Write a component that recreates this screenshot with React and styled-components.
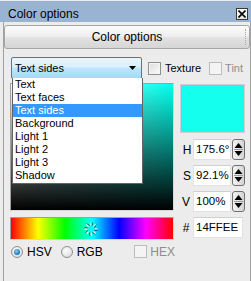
import React from 'react';
import styled, { createGlobalStyle } from 'styled-components';

const Global = createGlobalStyle`
  html, body { margin: 0; padding: 0; background: #ececec; }
  body { font-family: "Liberation Sans", Arial, sans-serif; color: #000; }
`;

const Window = styled.div`
  width: 251px;
  height: 281px;
  background: #ececec;
  display: flex;
  flex-direction: column;
  overflow: hidden;
`;

const TitleBar = styled.div`
  margin-top: 1px;
  height: 21px;
  box-sizing: border-box;
  padding: 6px 3px 0 8px;
  background: #99b4d2;
  display: flex;
  justify-content: space-between;
  align-items: flex-start;
  flex-shrink: 0;
`;

const TitleText = styled.span`
  font-size: 12px;
  line-height: 14px;
`;

const CloseBox = styled.div`
  margin-top: 1px;
  width: 12px;
  height: 12px;
  box-sizing: border-box;
  border: 1px solid #3a3a3a;
  background: linear-gradient(#ffffff, #e4e4e4);
  display: flex;
  align-items: center;
  justify-content: center;
`;

const Panel = styled.div`
  flex: 1;
  margin-left: 3px;
  border-left: 1px solid #a0a0a0;
  border-right: 1px solid #a0a0a0;
  display: flex;
  flex-direction: column;
`;

const HeaderButton = styled.div`
  position: relative;
  margin-top: 3px;
  height: 24px;
  box-sizing: border-box;
  border: 1px solid #a6a6a6;
  border-radius: 3px;
  background: linear-gradient(#fbfbfb, #f0f0f0 45%, #e1e1e1 55%, #d6d6d6);
  font-size: 12px;
  line-height: 22px;
  text-align: center;
  &::after {
    content: "";
    position: absolute;
    right: 3px;
    top: 3px;
    bottom: 3px;
    border-left: 1px dotted #a8a8a8;
  }
`;

const Content = styled.div`
  padding: 8px 0 0 6px;
  display: flex;
  flex-direction: column;
`;

const TopRow = styled.div`
  position: relative;
  z-index: 2;
  display: flex;
  align-items: center;
  height: 22px;
`;

const Combo = styled.div`
  position: relative;
  margin-left: 1px;
  width: 131px;
  height: 22px;
  box-sizing: border-box;
  border: 1px solid #3c7fb1;
  border-radius: 2px;
  background: linear-gradient(#eaf6fd, #d9f0fc 45%, #bee6fd 50%, #a7d9f5);
  display: flex;
  align-items: center;
  justify-content: space-between;
  padding: 0 5px 0 3px;
  font-size: 11px;
`;

const ComboList = styled.div`
  position: absolute;
  top: 100%;
  left: 0;
  width: 131px;
  box-sizing: border-box;
  background: #fff;
  border: 1px solid #646464;
  border-top: none;
  padding-bottom: 1px;
`;

const ComboItem = styled.div`
  height: 13px;
  line-height: 13px;
  font-size: 11px;
  padding-left: 2px;
  background: ${p => (p.$active ? '#3399ff' : 'transparent')};
  color: ${p => (p.$active ? '#fff' : '#000')};
`;

const CheckLabel = styled.div`
  display: flex;
  align-items: center;
  margin-left: ${p => p.$ml}px;
  font-size: 11px;
  color: ${p => (p.$disabled ? '#8d8d8d' : '#000')};
`;

const Box = styled.span`
  width: 13px;
  height: 13px;
  box-sizing: border-box;
  border: 1px solid ${p => (p.$disabled ? '#bcbcbc' : '#8e8f8f')};
  background: ${p => (p.$disabled ? '#f4f4f4' : 'linear-gradient(135deg, #dcdcdc, #fbfbfb)')};
  box-shadow: inset 0 0 0 1px ${p => (p.$disabled ? '#f4f4f4' : '#f4f4f4')};
  margin-right: ${p => p.$gap}px;
`;

const Main = styled.div`
  display: flex;
  gap: 6px;
  margin-top: 4px;
`;

const LeftCol = styled.div`
  width: 164px;
  display: flex;
  flex-direction: column;
`;

const SVSquare = styled.div`
  height: 128px;
  box-sizing: border-box;
  border: 1px solid #a0a0a0;
  border-right-color: #d8d8d8;
  border-bottom-color: #d8d8d8;
  background: linear-gradient(to top, #000, rgba(0, 0, 0, 0)),
    linear-gradient(to right, #fff, #00ffec);
`;

const HueBar = styled.div`
  position: relative;
  margin-top: 6px;
  height: 23px;
  box-sizing: border-box;
  border: 1px solid #a0a0a0;
  border-right-color: #d8d8d8;
  border-bottom-color: #d8d8d8;
  background: linear-gradient(to right, #f00, #ff0, #0f0, #0ff, #00f, #f0f, #f00);
`;

const HueMarker = styled.svg`
  position: absolute;
  left: 71px;
  top: 2px;
`;

const RadioRow = styled.div`
  margin-top: 5px;
  display: flex;
  align-items: center;
  height: 13px;
  padding-left: 1px;
  font-size: 12px;
`;

const RadioItem = styled.div`
  display: flex;
  align-items: center;
  margin-right: ${p => p.$mr}px;
`;

const RadioCircle = styled.span`
  width: 12px;
  height: 12px;
  box-sizing: border-box;
  border-radius: 50%;
  border: 1px solid #8e8f8f;
  background: radial-gradient(circle at 40% 35%, #ffffff, #d4d4d4);
  display: flex;
  align-items: center;
  justify-content: center;
  margin-right: 4px;
  &::after {
    content: "";
    display: ${p => (p.$checked ? 'block' : 'none')};
    width: 6px;
    height: 6px;
    border-radius: 50%;
    background: radial-gradient(circle at 40% 35%, #7fd0f7, #1e73b9 70%, #0f4f8a);
  }
`;

const HexCheck = styled.div`
  margin-left: auto;
  margin-right: -1px;
  display: flex;
  align-items: center;
  font-size: 12px;
  color: #8d8d8d;
`;

const RightCol = styled.div`
  width: 66px;
  display: flex;
  flex-direction: column;
  gap: 5px;
`;

const Swatch = styled.div`
  margin-top: 1px;
  margin-bottom: 1px;
  width: 65px;
  height: 49px;
  box-sizing: border-box;
  border: 1px solid #d0d0d0;
  background: #14ffee;
`;

const FieldRow = styled.div`
  display: flex;
  align-items: center;
  height: 21px;
`;

const FieldLabel = styled.span`
  width: 12px;
  font-size: 12px;
  text-align: center;
  padding-left: ${p => p.$pl || 0}px;
  box-sizing: border-box;
`;

const Field = styled.div`
  width: ${p => p.$w}px;
  height: 21px;
  box-sizing: border-box;
  border: 1px solid #e2e2e2;
  border-top-color: #cfcfcf;
  background: #fff;
  font-size: 11.5px;
  line-height: 19px;
  padding-left: 2px;
  margin-left: 1px;
`;

const Spinner = styled.div`
  margin-left: 1px;
  width: 13px;
  height: 21px;
  box-sizing: border-box;
  border: 1px solid #707070;
  border-radius: 3px;
  background: linear-gradient(to right, #f3f3f3, #d5d5d5);
  display: flex;
  align-items: center;
  justify-content: center;
`;

function Arrow() {
  return (
    <svg width="7" height="4" viewBox="0 0 7 4">
      <path d="M0 0 L7 0 L3.5 4 Z" fill="#000" />
    </svg>
  );
}

function SpinIcon() {
  return (
    <svg width="9" height="15" viewBox="0 0 9 15">
      <path d="M4.5 1 L8.5 6 L0.5 6 Z" fill="#000" />
      <line x1="0" y1="7.5" x2="9" y2="7.5" stroke="#9a9a9a" strokeWidth="1" />
      <path d="M0.5 9 L8.5 9 L4.5 14 Z" fill="#000" />
    </svg>
  );
}

function CloseIcon() {
  return (
    <svg width="8" height="8" viewBox="0 0 8 8">
      <path d="M0.5 0.5 L7.5 7.5 M7.5 0.5 L0.5 7.5" stroke="#000" strokeWidth="1.6" />
    </svg>
  );
}

function Marker() {
  const dirs = [0, 45, 90, 135, 180, 225, 270, 315];
  return (
    <HueMarker width="18" height="18" viewBox="-9 -9 18 18">
      {dirs.map(a => {
        const r = (a * Math.PI) / 180;
        const x1 = Math.cos(r) * 3.5;
        const y1 = Math.sin(r) * 3.5;
        const x2 = Math.cos(r) * 6.5;
        const y2 = Math.sin(r) * 6.5;
        const ox = -Math.sin(r) * 1;
        const oy = Math.cos(r) * 1;
        return (
          <g key={a}>
            <line x1={x1 + ox} y1={y1 + oy} x2={x2 + ox} y2={y2 + oy} stroke="#000" strokeWidth="1" />
            <line x1={x1} y1={y1} x2={x2} y2={y2} stroke="#fff" strokeWidth="1.2" />
          </g>
        );
      })}
    </HueMarker>
  );
}

const items = ['Text', 'Text faces', 'Text sides', 'Background', 'Light 1', 'Light 2', 'Light 3', 'Shadow'];

export default function App() {
  return (
    <Window>
      <Global />
      <TitleBar>
        <TitleText>Color options</TitleText>
        <CloseBox>
          <CloseIcon />
        </CloseBox>
      </TitleBar>
      <Panel>
        <HeaderButton>Color options</HeaderButton>
        <Content>
          <TopRow>
            <Combo>
              <span>Text sides</span>
              <Arrow />
              <ComboList>
                {items.map(it => (
                  <ComboItem key={it} $active={it === 'Text sides'}>
                    {it}
                  </ComboItem>
                ))}
              </ComboList>
            </Combo>
            <CheckLabel $ml={6}>
              <Box $gap={4} />
              Texture
            </CheckLabel>
            <CheckLabel $ml={8} $disabled>
              <Box $gap={3} $disabled />
              Tint
            </CheckLabel>
          </TopRow>
          <Main>
            <LeftCol>
              <SVSquare />
              <HueBar>
                <Marker />
              </HueBar>
              <RadioRow>
                <RadioItem $mr={9}>
                  <RadioCircle $checked />
                  HSV
                </RadioItem>
                <RadioItem $mr={0}>
                  <RadioCircle />
                  RGB
                </RadioItem>
                <HexCheck>
                  <Box $gap={3} $disabled />
                  HEX
                </HexCheck>
              </RadioRow>
            </LeftCol>
            <RightCol>
              <Swatch />
              <FieldRow>
                <FieldLabel $pl={2}>H</FieldLabel>
                <Field $w={38}>175.6°</Field>
                <Spinner>
                  <SpinIcon />
                </Spinner>
              </FieldRow>
              <FieldRow>
                <FieldLabel $pl={2}>S</FieldLabel>
                <Field $w={38}>92.1%</Field>
                <Spinner>
                  <SpinIcon />
                </Spinner>
              </FieldRow>
              <FieldRow>
                <FieldLabel>V</FieldLabel>
                <Field $w={38}>100%</Field>
                <Spinner>
                  <SpinIcon />
                </Spinner>
              </FieldRow>
              <FieldRow>
                <FieldLabel>#</FieldLabel>
                <Field $w={50}>14FFEE</Field>
              </FieldRow>
            </RightCol>
          </Main>
        </Content>
      </Panel>
    </Window>
  );
}
